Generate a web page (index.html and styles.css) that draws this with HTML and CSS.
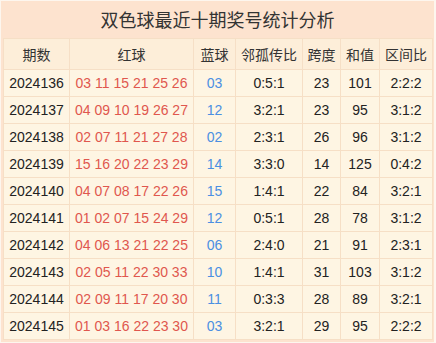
FILE: index.html
```html
<!DOCTYPE html>
<html lang="zh-CN">
<head>
<meta charset="utf-8">
<title>双色球最近十期奖号统计分析</title>
<link rel="stylesheet" href="styles.css">
</head>
<body>
<div class="panel">
  <div class="title">双色球最近十期奖号统计分析</div>
  <table class="stats">
    <colgroup>
      <col class="c-issue"><col class="c-red"><col class="c-blue"><col class="c-ratio"><col class="c-span"><col class="c-sum"><col class="c-zone">
    </colgroup>
    <thead>
      <tr><th>期数</th><th>红球</th><th>蓝球</th><th>邻孤传比</th><th>跨度</th><th>和值</th><th>区间比</th></tr>
    </thead>
    <tbody>
      <tr><td>2024136</td><td class="red">03 11 15 21 25 26</td><td class="blue">03</td><td>0:5:1</td><td>23</td><td>101</td><td>2:2:2</td></tr>
      <tr><td>2024137</td><td class="red">04 09 10 19 26 27</td><td class="blue">12</td><td>3:2:1</td><td>23</td><td>95</td><td>3:1:2</td></tr>
      <tr><td>2024138</td><td class="red">02 07 11 21 27 28</td><td class="blue">02</td><td>2:3:1</td><td>26</td><td>96</td><td>3:1:2</td></tr>
      <tr><td>2024139</td><td class="red">15 16 20 22 23 29</td><td class="blue">14</td><td>3:3:0</td><td>14</td><td>125</td><td>0:4:2</td></tr>
      <tr><td>2024140</td><td class="red">04 07 08 17 22 26</td><td class="blue">15</td><td>1:4:1</td><td>22</td><td>84</td><td>3:2:1</td></tr>
      <tr><td>2024141</td><td class="red">01 02 07 15 24 29</td><td class="blue">12</td><td>0:5:1</td><td>28</td><td>78</td><td>3:1:2</td></tr>
      <tr><td>2024142</td><td class="red">04 06 13 21 22 25</td><td class="blue">06</td><td>2:4:0</td><td>21</td><td>91</td><td>2:3:1</td></tr>
      <tr><td>2024143</td><td class="red">02 05 11 22 30 33</td><td class="blue">10</td><td>1:4:1</td><td>31</td><td>103</td><td>3:1:2</td></tr>
      <tr><td>2024144</td><td class="red">02 09 11 17 20 30</td><td class="blue">11</td><td>0:3:3</td><td>28</td><td>89</td><td>3:2:1</td></tr>
      <tr><td>2024145</td><td class="red">01 03 16 22 23 30</td><td class="blue">03</td><td>3:2:1</td><td>29</td><td>95</td><td>2:2:2</td></tr>
    </tbody>
  </table>
</div>
</body>
</html>
```
FILE: styles.css
```css
html, body {
  margin: 0;
  padding: 0;
  background: #fdf6ee;
}
body {
  font-family: "Liberation Sans", Arial, "Noto Sans CJK SC", sans-serif;
  color: #222;
}
.panel {
  width: 433px;
  margin: 1px 2px 2px 1px;
  padding: 0 2px 2px 2px;
  box-sizing: border-box;
  background: #fde3cf;
}
.title {
  height: 37px;
  line-height: 37px;
  text-align: center;
  font-family: "Noto Sans CJK SC", sans-serif;
  font-size: 18px;
  color: #333;
}
.stats {
  width: 429px;
  table-layout: fixed;
  border-collapse: collapse;
  background: #fef5e3;
}
.c-issue { width: 66px; }
.c-red { width: 124px; }
.c-blue { width: 42px; }
.c-ratio { width: 67px; }
.c-span { width: 38px; }
.c-sum { width: 39px; }
.c-zone { width: 53px; }
.stats th, .stats td {
  border: 1px solid #f6dfc6;
  text-align: center;
  padding: 0;
  white-space: nowrap;
}
.stats th {
  height: 30px;
  background: #fdeed9;
  font-family: "Noto Sans CJK SC", sans-serif;
  font-weight: normal;
  font-size: 14px;
  color: #333;
}
.stats td {
  height: 26px;
  font-size: 14px;
}
.stats td.red { color: #e0574e; }
.stats td.blue { color: #4b8fe2; }
```
